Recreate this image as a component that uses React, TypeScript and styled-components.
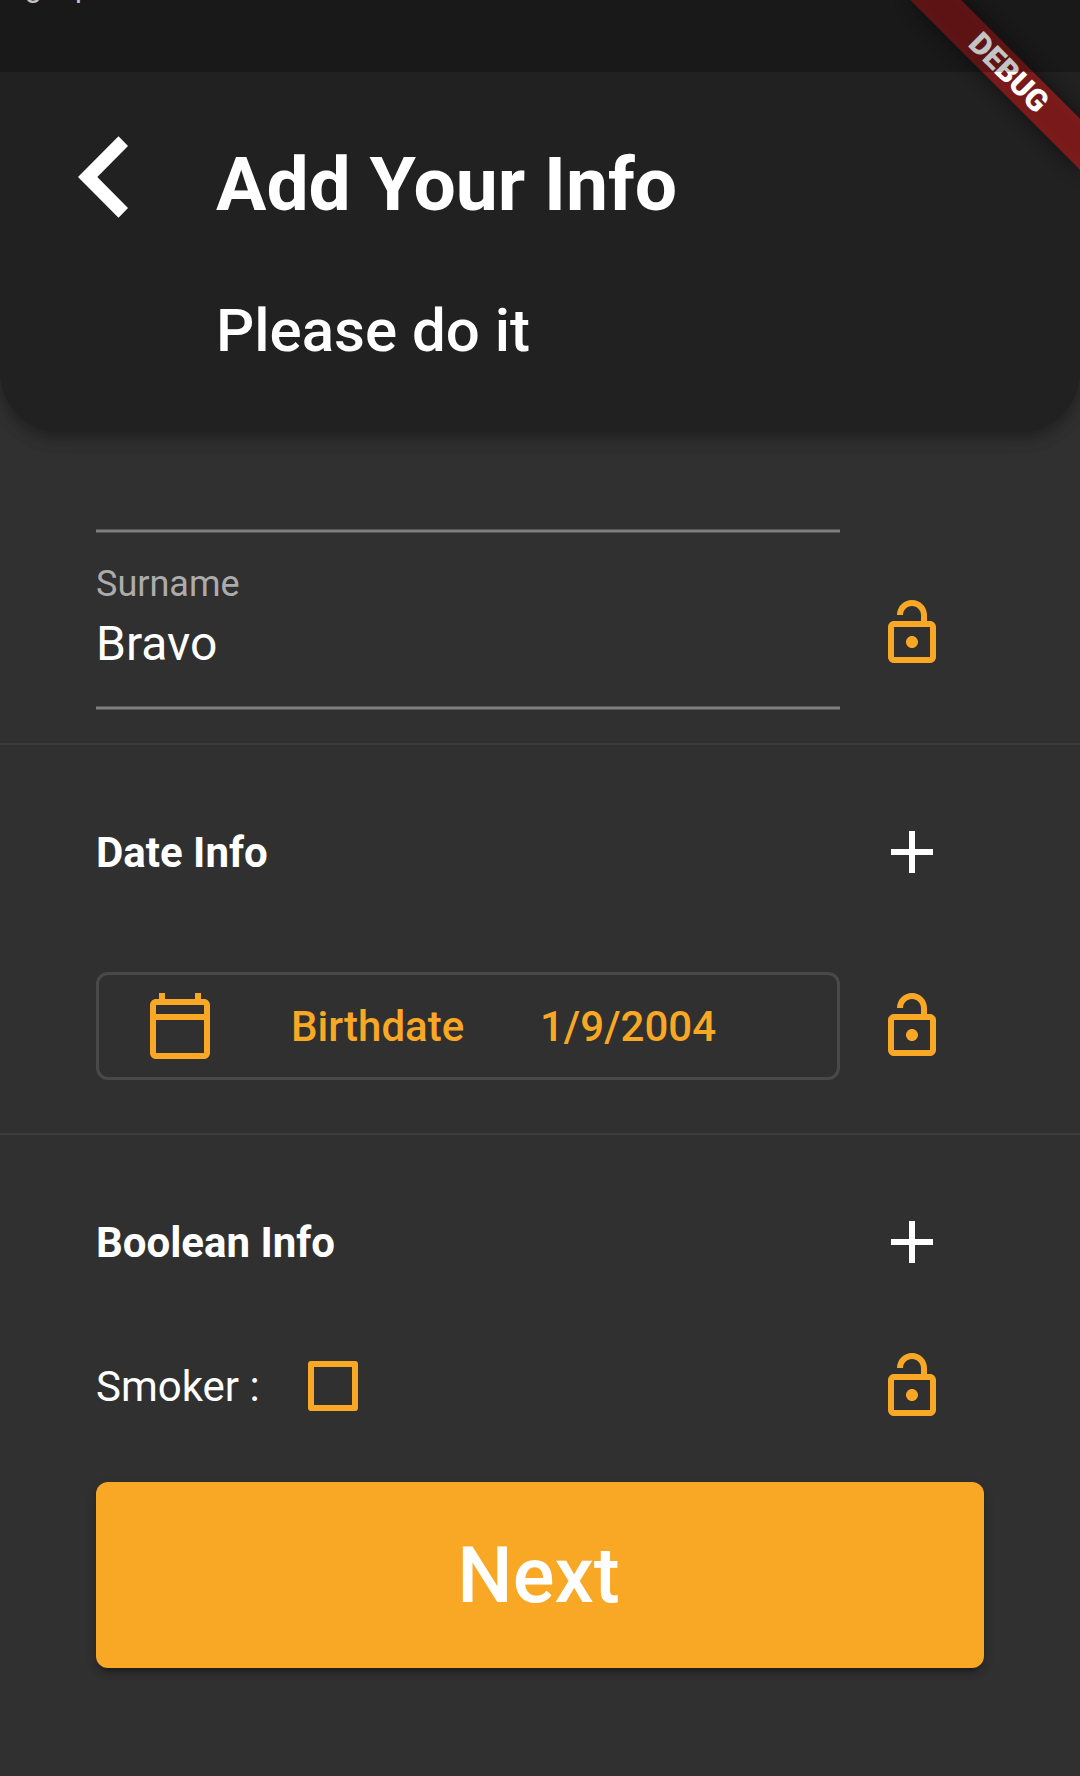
import React from "react";
import styled, { createGlobalStyle } from "styled-components";

const amber = "#f9a825";

const GlobalStyle = createGlobalStyle`
  * { box-sizing: border-box; }
  body {
    margin: 0;
    background: #303030;
    color: #fff;
    font-family: Roboto, "Noto Sans", sans-serif;
  }
  p, h1, h2 { margin: 0; font-weight: inherit; }
  button { font: inherit; color: inherit; border: 0; background: none; padding: 0; }
  svg { display: block; }
`;

const Screen = styled.main`
  position: relative;
  width: 1080px;
  height: 1776px;
  overflow: hidden;
  background: #303030;
`;

const StatusBar = styled.div`
  position: absolute;
  inset: 0 0 auto 0;
  z-index: 3;
  height: 72px;
  overflow: hidden;
  background: rgba(0, 0, 0, 0.23);
`;

const StatusText = styled.span`
  display: block;
  margin: -31px 0 0 0;
  font-size: 30px;
  line-height: 36px;
  color: #c4c4c4;
`;

const Header = styled.header`
  position: relative;
  z-index: 1;
  display: flex;
  height: 432px;
  padding-top: 72px;
  background: #212121;
  border-radius: 0 0 60px 60px;
  box-shadow: 0 6px 12px -3px rgba(0, 0, 0, 0.2), 0 9px 15px rgba(0, 0, 0, 0.12),
    0 3px 24px rgba(0, 0, 0, 0.08);
`;

const BackButton = styled.button`
  width: 50px;
  height: 82px;
  margin: 64px 88px 0 78px;
`;

const Titles = styled.div`
  display: flex;
  flex-direction: column;
`;

const Title = styled.h1`
  margin-top: 68px;
  font-size: 75px;
  font-weight: 700;
  line-height: 88px;
`;

const Subtitle = styled.p`
  margin-top: 68px;
  font-size: 60px;
  font-weight: 500;
  line-height: 70px;
`;

const Banner = styled.div`
  position: absolute;
  top: 84px;
  right: -120px;
  z-index: 2;
  width: 240px;
  height: 36px;
  transform: rotate(45deg);
  transform-origin: 120px -84px;

  &::before {
    content: "";
    position: absolute;
    inset: 0;
    background: rgba(0, 0, 0, 0.5);
    filter: blur(12px);
  }
`;

const BannerRibbon = styled.div`
  position: relative;
  height: 36px;
  padding-left: 2px;
  background: rgba(183, 28, 28, 0.627);
  font-size: 30.6px;
  font-weight: 900;
  line-height: 36px;
  text-align: center;
`;

const Underline = styled.div`
  width: 744px;
  height: 4px;
  background: #7f7f7f;
  border: solid #575757;
  border-width: 1px 0;
`;

const NameSection = styled.section`
  height: 311px;
  padding: 97px 96px 0;
`;

const Row = styled.div<{ $height: number }>`
  display: flex;
  align-items: center;
  height: ${(p) => p.$height}px;
`;

const FieldRow = styled.div`
  display: flex;
  align-items: flex-end;
  height: 177px;
`;

const Field = styled.label`
  display: flex;
  flex-direction: column;
  width: 744px;
  height: 177px;
`;

const FieldLabel = styled.span`
  margin-top: 30px;
  font-size: 36px;
  line-height: 42px;
  color: #acacac;
`;

const FieldValue = styled.span`
  margin: 11px 0 auto;
  font-size: 48px;
  line-height: 56px;
`;

const IconButton = styled.button<{ $color?: string }>`
  display: grid;
  place-items: center;
  width: 144px;
  height: 144px;
  margin-left: auto;
  color: ${(p) => p.$color ?? "#fff"};

  ${FieldRow} & {
    margin-bottom: 5px;
  }
`;

const Section = styled.section<{ $height: number }>`
  height: ${(p) => p.$height}px;
  padding: 35px 96px 0;
  border-top: 2px solid #3c3c3c;
`;

const SectionTitle = styled.h2`
  padding-top: 2px;
  font-size: 42px;
  font-weight: 700;
  line-height: 50px;
`;

const DateButton = styled.button`
  display: flex;
  align-items: center;
  width: 744px;
  height: 108px;
  padding-left: 45px;
  border: 3px solid #494949;
  border-radius: 12px;
  color: ${amber};
  font-size: 42px;
  font-weight: 500;
  line-height: 50px;
`;

const DateText = styled.span`
  padding-top: 2px;
  text-align: left;
`;

const DateName = styled(DateText)`
  width: 249px;
  margin-left: 75px;
`;

const CheckLabel = styled.label`
  display: flex;
  align-items: center;
  gap: 48px;
  font-size: 42px;
  line-height: 50px;
`;

const CheckText = styled.span`
  padding-top: 2px;
`;

const CheckBox = styled.span`
  width: 50px;
  height: 50px;
  border: 6px solid ${amber};
  border-radius: 3px;
`;

const NextButton = styled.button`
  display: block;
  width: 888px;
  height: 186px;
  margin: 24px 0 0;
  padding: 2px 3px 0 0;
  border-radius: 12px;
  background: ${amber};
  box-shadow: 0 9px 3px -6px rgba(0, 0, 0, 0.2), 0 6px 6px rgba(0, 0, 0, 0.12),
    0 3px 12px rgba(0, 0, 0, 0.1);
  font-size: 78px;
  font-weight: 500;
  line-height: 92px;
`;

const glyphs = {
  add: "M19 13h-6v6h-2v-6H5v-2h6V5h2v6h6v2z",
  lockOpen:
    "M12 17c1.1 0 2-.9 2-2s-.9-2-2-2-2 .9-2 2 .9 2 2 2zm6-9h-1V6c0-2.76-2.24-5-5-5S7 3.24 7 6h2c0-1.66 1.34-3 3-3s3 1.34 3 3v2H6c-1.1 0-2 .9-2 2v10c0 1.1.9 2 2 2h12c1.1 0 2-.9 2-2V10c0-1.1-.9-2-2-2zm0 12H6V10h12v10z",
  calendar:
    "M20 3h-1V1h-2v2H7V1H5v2H4c-1.1 0-2 .9-2 2v16c0 1.1.9 2 2 2h16c1.1 0 2-.9 2-2V5c0-1.1-.9-2-2-2zm0 18H4V10h16v11zm0-13H4V5h16v3z",
};

const Icon = ({ name }: { name: keyof typeof glyphs }) => (
  <svg width="72" height="72" viewBox="0 0 24 24" fill="currentColor" aria-hidden>
    <path d={glyphs[name]} />
  </svg>
);

const LockButton = () => (
  <IconButton $color={amber} aria-label="Unlock">
    <Icon name="lockOpen" />
  </IconButton>
);

const SectionHeading = ({ children }: { children: React.ReactNode }) => (
  <Row $height={144}>
    <SectionTitle>{children}</SectionTitle>
    <IconButton aria-label="Add">
      <Icon name="add" />
    </IconButton>
  </Row>
);

export default function App() {
  return (
    <>
      <GlobalStyle />
      <Screen>
        <StatusBar>
          <StatusText>Signup</StatusText>
        </StatusBar>
        <Banner>
          <BannerRibbon>DEBUG</BannerRibbon>
        </Banner>
        <Header>
          <BackButton aria-label="Back">
            <svg width="50" height="82" viewBox="0 0 50 82" fill="#fff">
              <path d="M40.5 .3 50 10 19.3 41 50 72 40.5 81.7 0 41z" />
            </svg>
          </BackButton>
          <Titles>
            <Title>Add Your Info</Title>
            <Subtitle>Please do it</Subtitle>
          </Titles>
        </Header>

        <NameSection>
          <Underline />
          <FieldRow>
            <Field>
              <FieldLabel>Surname</FieldLabel>
              <FieldValue>Bravo</FieldValue>
              <Underline />
            </Field>
            <LockButton />
          </FieldRow>
        </NameSection>

        <Section $height={390}>
          <SectionHeading>Date Info</SectionHeading>
          <Row $height={204}>
            <DateButton>
              <Icon name="calendar" />
              <DateName>Birthdate</DateName>
              <DateText>1/9/2004</DateText>
            </DateButton>
            <LockButton />
          </Row>
        </Section>

        <Section $height={643}>
          <SectionHeading>Boolean Info</SectionHeading>
          <Row $height={144}>
            <CheckLabel>
              <CheckText>Smoker :</CheckText>
              <CheckBox />
            </CheckLabel>
            <LockButton />
          </Row>
          <NextButton>Next</NextButton>
        </Section>
      </Screen>
    </>
  );
}
